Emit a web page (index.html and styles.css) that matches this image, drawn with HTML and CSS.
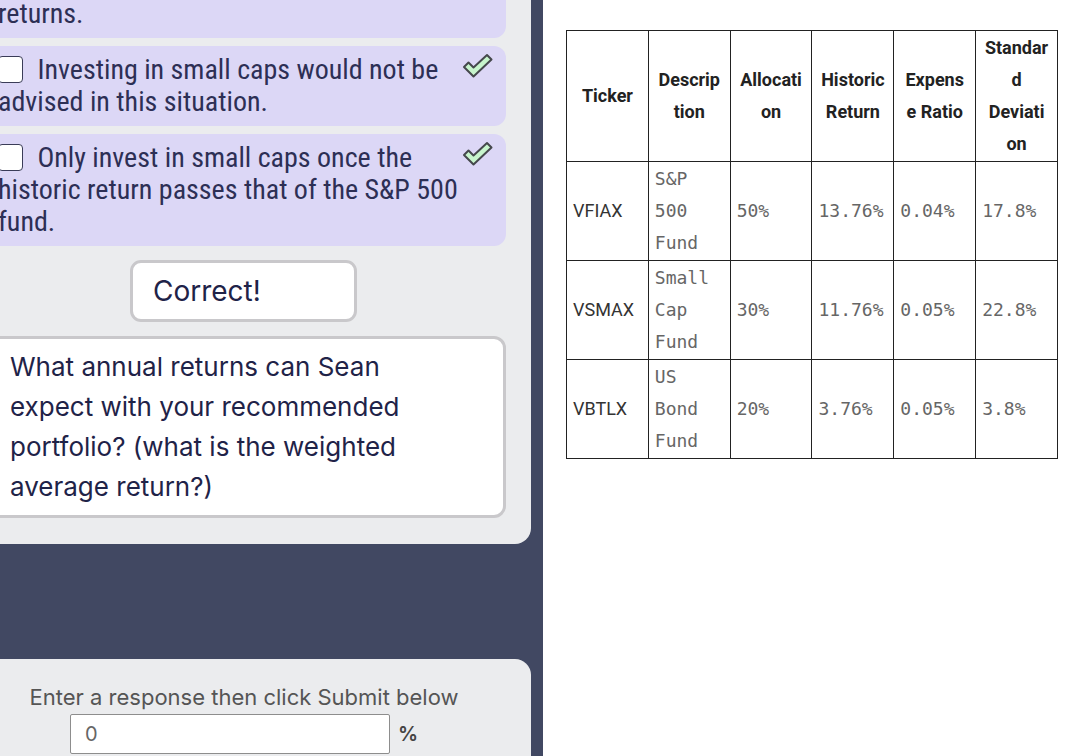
FILE: index.html
```html
<!DOCTYPE html>
<html lang="en">
<head>
    <meta charset="UTF-8">
    <meta name="viewport" content="width=device-width, initial-scale=1.0">
    <title>Portfolio Question</title>
    <link rel="stylesheet" href="styles.css">
</head>
<body>
    <div class="left-pane">
        <div class="card quiz-card">
            <div class="option">
                <svg class="check" width="31" height="26" viewBox="0 0 31 26"><path d="M2 14 L6.5 9.5 L11.5 14.5 L25 2 L29.5 6.5 L11.5 23.5 Z"/></svg>
                Aim for the highest<br>returns.
            </div>
            <div class="option">
                <svg class="check" width="31" height="26" viewBox="0 0 31 26"><path d="M2 14 L6.5 9.5 L11.5 14.5 L25 2 L29.5 6.5 L11.5 23.5 Z"/></svg>
                <input type="checkbox" class="opt-box"> Investing in small caps would not be advised in this situation.
            </div>
            <div class="option">
                <svg class="check" width="31" height="26" viewBox="0 0 31 26"><path d="M2 14 L6.5 9.5 L11.5 14.5 L25 2 L29.5 6.5 L11.5 23.5 Z"/></svg>
                <input type="checkbox" class="opt-box"> Only invest in small caps once the historic return passes that of the S&amp;P 500 fund.
            </div>
            <div class="feedback">Correct!</div>
            <div class="question">
                What annual returns can Sean expect with your recommended portfolio? (what is the weighted average return?)
            </div>
        </div>

        <div class="card answer-card">
            <p class="prompt">Enter a response then click Submit below</p>
            <div class="answer-row">
                <input type="text" class="answer" value="0">
                <span class="unit">%</span>
            </div>
        </div>
    </div>

    <div class="right-pane">
        <table class="funds">
            <thead>
                <tr>
                    <th>Ticker</th>
                    <th>Description</th>
                    <th>Allocation</th>
                    <th>Historic Return</th>
                    <th>Expense Ratio</th>
                    <th>Standard Deviation</th>
                </tr>
            </thead>
            <tbody>
                <tr>
                    <td>VFIAX</td>
                    <td class="mono">S&amp;P 500 Fund</td>
                    <td class="mono">50%</td>
                    <td class="mono">13.76%</td>
                    <td class="mono">0.04%</td>
                    <td class="mono">17.8%</td>
                </tr>
                <tr>
                    <td>VSMAX</td>
                    <td class="mono">Small Cap Fund</td>
                    <td class="mono">30%</td>
                    <td class="mono">11.76%</td>
                    <td class="mono">0.05%</td>
                    <td class="mono">22.8%</td>
                </tr>
                <tr>
                    <td>VBTLX</td>
                    <td class="mono">US Bond Fund</td>
                    <td class="mono">20%</td>
                    <td class="mono">3.76%</td>
                    <td class="mono">0.05%</td>
                    <td class="mono">3.8%</td>
                </tr>
            </tbody>
        </table>
    </div>
</body>
</html>
```

FILE: styles.css
```css
body {
    margin: 0;
    height: 756px;
    overflow: hidden;
    display: flex;
    font-family: Inter, "Noto Sans", sans-serif;
    background: #fff;
}
.left-pane {
    flex: none;
    width: 543px;
    height: 756px;
    background-color: #414862;
    overflow: hidden;
}
.card {
    width: 561px;
    margin-left: -30px;
    background-color: #ebecee;
    box-sizing: border-box;
}
.quiz-card {
    margin-top: -50px;
    padding: 8px 25px 26px 18px;
    border-bottom-right-radius: 16px;
}
.option {
    background-color: #dcd7f6;
    border-radius: 12px;
    padding: 8px 13px 8px 10px;
    margin-bottom: 8px;
    font-family: "Roboto Condensed", "Liberation Sans Narrow", "DejaVu Sans Condensed", sans-serif;
    font-stretch: condensed;
    font-size: 28px;
    line-height: 32px;
    color: #2d2f55;
}
.check {
    float: right;
    margin: -1px 0 0 10px;
}
.check path {
    fill: #c7f5cc;
    stroke: #45484c;
    stroke-width: 2;
    stroke-linejoin: round;
}
.opt-box {
    appearance: none;
    -webkit-appearance: none;
    width: 25px;
    height: 27px;
    margin: 0 8px 0 0;
    border: 1.5px solid #3a3c58;
    border-radius: 4px;
    background: #fff;
    vertical-align: -4px;
    box-sizing: border-box;
}
.feedback {
    width: 227px;
    box-sizing: border-box;
    margin: 14px 0 14px 142px;
    padding: 11px 20px;
    background: #fff;
    border: 3px solid #c9c8cb;
    border-radius: 11px;
    font-size: 28px;
    line-height: 34px;
    color: #1f2348;
}
.question {
    background: #fff;
    border: 3px solid #c9c8cb;
    border-radius: 12px;
    padding: 8px 60px 8px 19px;
    font-size: 26px;
    line-height: 40px;
    color: #1f2348;
}
.answer-card {
    margin-top: 115px;
    padding: 26px 25px 40px 12px;
    border-top-right-radius: 16px;
    text-align: center;
}
.prompt {
    margin: 0 0 5px;
    font-size: 22px;
    line-height: 24px;
    color: #555;
}
.answer-row {
    display: flex;
    justify-content: center;
    align-items: center;
    gap: 8px;
}
.answer {
    width: 320px;
    height: 40px;
    box-sizing: border-box;
    border: 1px solid #8d8d8d;
    border-radius: 2px;
    padding: 0 14px;
    font-family: Inter, sans-serif;
    font-size: 20px;
    color: #666;
}
.unit {
    font-size: 20px;
    font-weight: 600;
    color: #444;
}
.right-pane {
    flex: 1;
    padding: 30px 14px 0 23px;
}
.funds {
    border-collapse: collapse;
    table-layout: fixed;
    width: 492px;
    font-family: Roboto, "Liberation Sans", sans-serif;
    font-size: 18px;
    line-height: 32px;
    color: #333;
}
.funds th, .funds td {
    border: 1px solid #222;
    padding: 1px 6px;
    overflow-wrap: break-word;
    vertical-align: middle;
}
.funds th {
    padding: 1px 8px;
    font-weight: 700;
    text-align: center;
    color: #222;
}
.funds td {
    text-align: left;
}
.funds .mono {
    font-family: "DejaVu Sans Mono", "Liberation Mono", monospace;
    font-size: 18px;
    color: #666;
}
```
